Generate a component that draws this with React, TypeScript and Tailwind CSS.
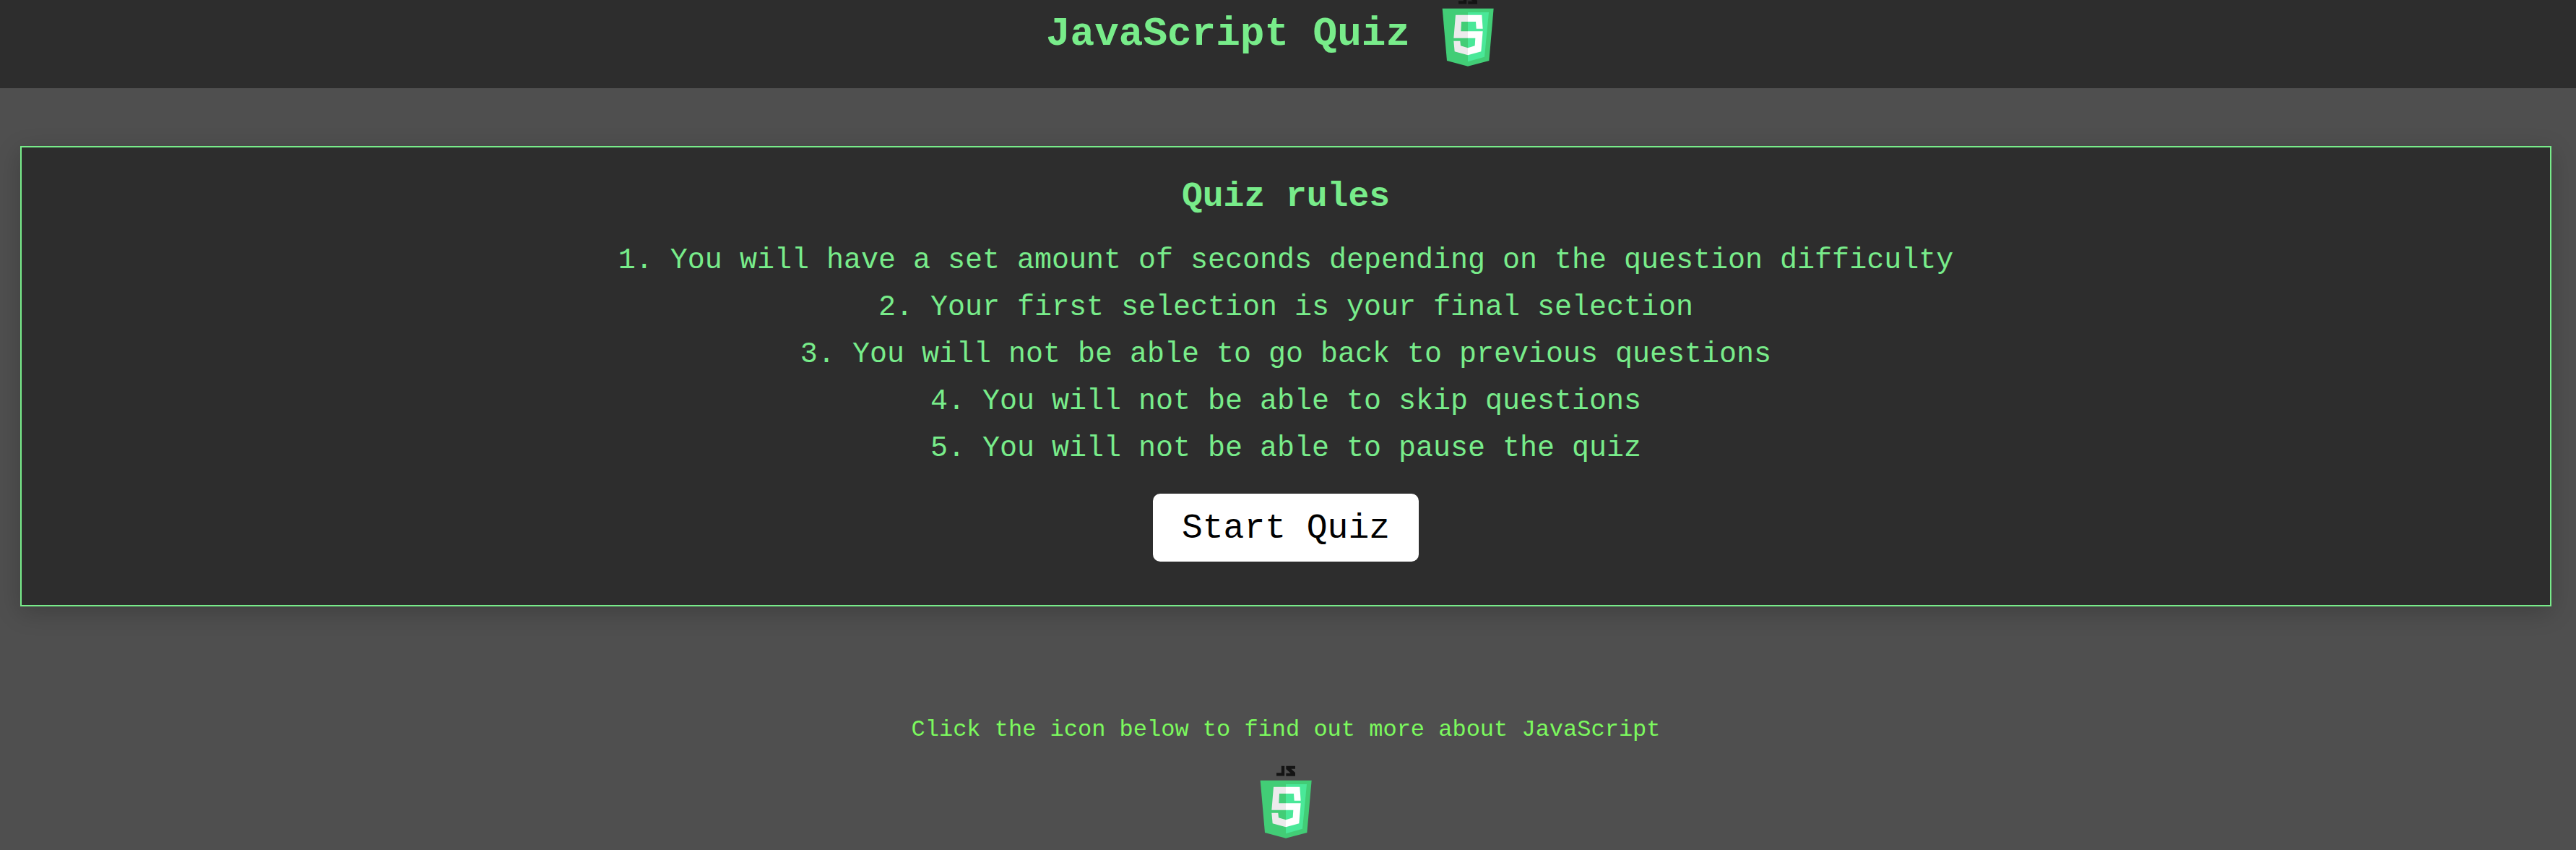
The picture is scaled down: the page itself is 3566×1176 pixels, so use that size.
import React from "react";

const rules = [
  "You will have a set amount of seconds depending on the question difficulty",
  "Your first selection is your final selection",
  "You will not be able to go back to previous questions",
  "You will not be able to skip questions",
  "You will not be able to pause the quiz",
];

function Logo() {
  return (
    <svg className="block h-[101px] w-[72px]" viewBox="72 58 216 303" role="img" aria-label="JavaScript logo">
      <path d="M168 60V95H141" fill="none" stroke="#141414" strokeWidth="13" />
      <path d="M181 60H219V72H202L219 88V102H181V90H200L181 73Z" fill="#141414" />
      <path d="M74 120H287L268 337L180 360L93 337Z" fill="#42cd76" />
      <path d="M180 136H267L249 321L180 341Z" fill="#4ae898" />
      <path d="M180 147H129L121 243H180V215H151L153 175H180ZM180 284L150 275L148 255H121L125 299L180 314Z" fill="#eceaec" />
      <path d="M180 147H238L242 204H215L213 175H180ZM180 215H242L235 299L180 314V284L209 275L211 243H180Z" fill="#fff" />
    </svg>
  );
}

export default function App() {
  return (
    <div className="flex h-[1176px] w-full flex-col overflow-hidden bg-[#4f4f4f] font-['Liberation_Mono',monospace] text-[#78ec8a]">
      <header className="flex h-[122px] shrink-0 justify-center gap-[44px] overflow-hidden bg-[#2d2d2d] pr-[50px]">
        <h1 className="mt-[15px] text-[56px] leading-[64px] font-bold whitespace-pre">JavaScript Quiz</h1>
        <div className="-mt-[9px]">
          <Logo />
        </div>
      </header>
      <main className="mt-[80px] mr-[34px] ml-[28px] flex h-[637px] shrink-0 flex-col items-center border-2 border-[#78ec8a] bg-[#2d2d2d] shadow-[0_8px_32px_rgba(0,0,0,0.2)]">
        <h2 className="mt-[40px] text-[48px] leading-[56px] font-bold">Quiz rules</h2>
        <ol className="mt-[28px] text-center text-[40px] leading-[65px]">
          {rules.map((rule, i) => (
            <li key={rule}>{i + 1}. {rule}</li>
          ))}
        </ol>
        <button className="mt-[30px] h-[94px] w-[368px] rounded-[10px] bg-white pt-[2px] text-[48px] leading-[56px] text-black">
          Start Quiz
        </button>
      </main>
      <footer className="mt-[151px] flex flex-col items-center pr-[6px] text-[#7cf95e]">
        <p className="text-[32px] leading-[40px]">Click the icon below to find out more about JavaScript</p>
        <a className="mt-[29px]" href="#javascript">
          <Logo />
        </a>
      </footer>
    </div>
  );
}
